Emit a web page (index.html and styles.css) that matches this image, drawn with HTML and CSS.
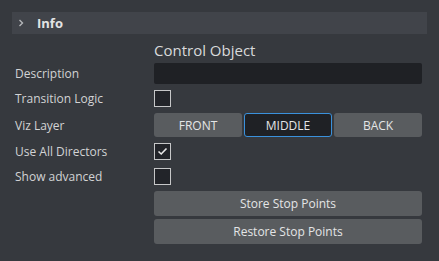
FILE: index.html
```html
<!DOCTYPE html>
<html>
<head>
<meta charset="utf-8">
<link rel="stylesheet" href="styles.css">
</head>
<body>
<div class="panel">
  <div class="header">
    <svg class="chev" width="6" height="8" viewBox="0 0 6 8"><path d="M1.5 1 L4.5 4 L1.5 7" fill="none" stroke="#b4b6b9" stroke-width="1.4"/></svg>
    <span class="htitle">Info</span>
  </div>
  <div class="form">
    <div class="label"></div>
    <div class="title">Control Object</div>

    <div class="label">Description</div>
    <div class="input"></div>

    <div class="label">Transition Logic</div>
    <div class="cell"><span class="check"></span></div>

    <div class="label">Viz Layer</div>
    <div class="seg">
      <div class="btn">FRONT</div>
      <div class="btn sel">MIDDLE</div>
      <div class="btn">BACK</div>
    </div>

    <div class="label">Use All Directors</div>
    <div class="cell"><span class="check on"><svg width="11" height="9" viewBox="0 0 11 9"><path d="M1.5 4.5 L4.2 7 L9.5 1.5" fill="none" stroke="#e8e8e8" stroke-width="1.6"/></svg></span></div>

    <div class="label lower">Show advanced</div>
    <div class="cell lower"><span class="check"></span></div>

    <div class="label"></div>
    <div class="buttons">
      <div class="wide">Store Stop Points</div>
      <div class="wide">Restore Stop Points</div>
    </div>
  </div>
</div>
</body>
</html>
```
FILE: styles.css
```css
html, body {
  margin: 0;
  padding: 0;
  background: #36393e;
}
body {
  width: 439px;
  height: 261px;
  font-family: "Open Sans", "Noto Sans", sans-serif;
  color: #d4d5d6;
}
.panel {
  padding: 12px 12px 0 12px;
  width: 415px;
}
.header {
  height: 22px;
  background: #41444a;
  display: flex;
  align-items: center;
}
.chev {
  margin-left: 6px;
}
.htitle {
  margin-left: 13px;
  font-size: 13px;
  font-weight: 700;
  color: #e2e3e4;
}
.form {
  display: grid;
  grid-template-columns: 142px 268px;
  grid-template-rows: 23px 21px 17px 24px 17px 19px auto;
  row-gap: 6px;
}
.label {
  font-size: 12px;
  padding-left: 3px;
  display: flex;
  align-items: center;
  color: #d2d3d4;
}
.lower {
  padding-top: 2px;
}
.title {
  font-size: 15px;
  color: #d9dadb;
  align-self: end;
  line-height: 16px;
  margin-bottom: -1px;
}
.input {
  background: #1f2125;
  border-radius: 2px;
}
.cell {
  display: flex;
  align-items: center;
}
.check {
  box-sizing: border-box;
  width: 17px;
  height: 17px;
  border: 1px solid #c6c7c8;
  background: #222429;
  display: flex;
  align-items: center;
  justify-content: center;
}
.seg {
  display: grid;
  grid-template-columns: 88px 88px 88px;
  column-gap: 2px;
}
.btn {
  box-sizing: border-box;
  background: #595c5f;
  border-radius: 3px;
  font-size: 12px;
  color: #e4e5e6;
  display: flex;
  align-items: center;
  justify-content: center;
}
.btn.sel {
  background: #1f2125;
  border: 1px solid #3a91dc;
}
.buttons {
  display: flex;
  flex-direction: column;
  gap: 3px;
}
.wide {
  height: 25px;
  background: #595c5f;
  border-radius: 3px;
  font-size: 12px;
  color: #e4e5e6;
  display: flex;
  align-items: center;
  justify-content: center;
}
```
